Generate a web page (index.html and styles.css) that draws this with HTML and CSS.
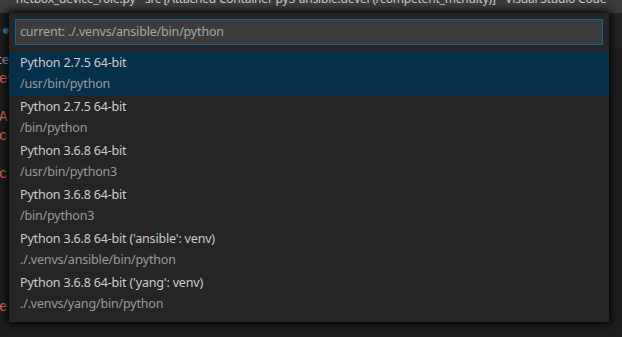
FILE: index.html
```html
<!DOCTYPE html>
<html lang="en">
<head>
    <meta charset="UTF-8">
    <title>Select Interpreter</title>

    <link rel="stylesheet" href="styles.css">
</head>

<body>
    <div class="window">
        <div class="titlebar">
            <span class="title">netbox_device_role.py - src [Attached Container py3-ansible.devel (/competent_mcnulty)] - Visual Studio Code</span>
        </div>

        <div class="tabs">
            <div class="tab">
                <span class="tab-icon"></span>
            </div>
        </div>

        <div class="breadcrumbs">
            <span class="crumb">te</span>
        </div>

        <div class="editor">
            <div class="line"><span class="red">ev</span></div>
            <div class="line"></div>
            <div class="line"><span class="red">A</span></div>
            <div class="line"><span class="red">c</span></div>
            <div class="line"></div>
            <div class="line"><span class="red">cl</span></div>
            <div class="line"></div>
            <div class="line"></div>
            <div class="line"></div>
            <div class="line"></div>
            <div class="line"></div>
            <div class="line"></div>
            <div class="line"><span class="red">e</span></div>
        </div>

        <div class="quick-pick">
            <div class="quick-input">current: ./.venvs/ansible/bin/python</div>
            <ul class="quick-list">
                <li class="selected">
                    <div class="label">Python 2.7.5 64-bit</div>
                    <div class="desc">/usr/bin/python</div>
                </li>
                <li>
                    <div class="label">Python 2.7.5 64-bit</div>
                    <div class="desc">/bin/python</div>
                </li>
                <li>
                    <div class="label">Python 3.6.8 64-bit</div>
                    <div class="desc">/usr/bin/python3</div>
                </li>
                <li>
                    <div class="label">Python 3.6.8 64-bit</div>
                    <div class="desc">/bin/python3</div>
                </li>
                <li>
                    <div class="label">Python 3.6.8 64-bit ('ansible': venv)</div>
                    <div class="desc">./.venvs/ansible/bin/python</div>
                </li>
                <li>
                    <div class="label">Python 3.6.8 64-bit ('yang': venv)</div>
                    <div class="desc">./.venvs/yang/bin/python</div>
                </li>
            </ul>
        </div>
    </div>
</body>
</html>
```

FILE: styles.css
```css
body {
    margin: 0;
    background: #1e1e1e;
}

.window {
    position: relative;
    width: 622px;
    height: 337px;
    overflow: hidden;
    background: #1e1e1e;
    font-family: "Noto Sans", "Open Sans", sans-serif;
}

.titlebar {
    height: 13px;
    overflow: hidden;
    background: #3c3c3c;
    color: #cccccc;
    font-size: 12px;
    letter-spacing: -0.2px;
    text-align: center;
    white-space: nowrap;
}

.titlebar .title {
    display: block;
    line-height: 16px;
    margin-top: -9px;
}

.tabs {
    height: 35px;
    background: #252526;
    display: flex;
}

.tab {
    width: 120px;
    background: #1e1e1e;
    display: flex;
    align-items: center;
}

.tab-icon {
    width: 6px;
    height: 6px;
    margin-left: 3px;
    border-radius: 50%;
    background: #3b8ac4;
}

.breadcrumbs {
    height: 22px;
    line-height: 22px;
    color: #a9a9a9;
    font-size: 13px;
    white-space: nowrap;
}

.crumb {
    margin-left: -3px;
}

.editor {
    font-family: "Liberation Mono", monospace;
    font-size: 14px;
}

.editor .line {
    height: 19px;
    line-height: 19px;
    white-space: nowrap;
}

.editor .red {
    color: #e0675d;
    margin-left: -1px;
}

.quick-pick {
    position: absolute;
    left: 9px;
    top: 13px;
    width: 600px;
    padding: 6px 0;
    background: #252526;
    box-shadow: 0 0 8px 2px #000000;
    font-size: 12.5px;
    letter-spacing: -0.18px;
}

.quick-input {
    margin: 0 6px 7px 6px;
    height: 24px;
    line-height: 24px;
    padding: 0 4px;
    border: 1px solid #0e639c;
    background: #3c3c3c;
    color: #a6a6a6;
}

.quick-list {
    list-style: none;
    margin: 0;
    padding: 0;
}

.quick-list li {
    height: 44px;
    padding-left: 11px;
}

.quick-list li.selected {
    background: #062f4a;
}

.quick-list .label {
    height: 22px;
    line-height: 22px;
    color: #cccccc;
}

.quick-list .desc {
    height: 22px;
    line-height: 19px;
    color: #9a9a9a;
}
```
